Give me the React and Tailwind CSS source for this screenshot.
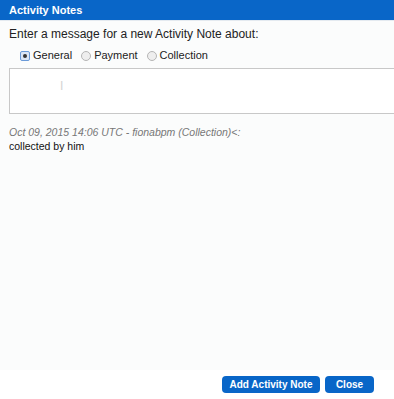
export default function App() {
  return (
    <div className="flex h-[399px] w-[394px] flex-col overflow-hidden bg-[#fbfcfc] font-['Liberation_Sans',Arial,sans-serif] text-[12px] text-[#222]">
      <div className="flex h-[20px] items-center bg-[#0966c8] px-[9px] text-[11px] font-bold text-white">
        Activity Notes
      </div>
      <div className="h-px bg-[#e4eaf0]" />
      <div className="flex-1 pl-[9px] pt-[6px]">
        <p className="leading-[15px]">Enter a message for a new Activity Note about:</p>
        <div className="mt-[6px] flex items-center pl-[11px] text-[11px] leading-[15px]">
          <label className="flex items-center gap-[3px]">
            <span className="flex h-[10px] w-[10px] items-center justify-center rounded-[2px] border border-[#6a9ad8] bg-[#dbe6f6]">
              <span className="h-[4px] w-[4px] rounded-full bg-[#333]" />
            </span>
            General
          </label>
          <label className="ml-[9px] flex items-center gap-[3px]">
            <span className="h-[10px] w-[10px] rounded-full border border-[#b5b5b5] bg-[#eee]" />
            Payment
          </label>
          <label className="ml-[9px] flex items-center gap-[3px]">
            <span className="h-[10px] w-[10px] rounded-full border border-[#b5b5b5] bg-[#eee]" />
            Collection
          </label>
        </div>
        <div className="mt-[5px] h-[46px] w-[400px] border border-[#c8c8c8] bg-white pl-[50px] pt-[8px]">
          <span className="text-[12px] text-[#d4d4d4]">I</span>
        </div>
        <p className="mt-[11px] text-[10.5px] italic leading-[14px] text-[#777]">
          Oct 09, 2015 14:06 UTC - fionabpm (Collection)&lt;:
        </p>
        <p className="text-[10.5px] leading-[14px] text-[#111]">collected by him</p>
      </div>
      <div className="flex h-[29px] items-start justify-end gap-[5px] bg-white pr-[20px] pt-[6px]">
        <button className="h-[17px] w-[98px] rounded-[4px] bg-[#0966c8] text-[10px] font-bold text-white">
          Add Activity Note
        </button>
        <button className="h-[17px] w-[49px] rounded-[4px] bg-[#0966c8] text-[10px] font-bold text-white">
          Close
        </button>
      </div>
    </div>
  );
}
